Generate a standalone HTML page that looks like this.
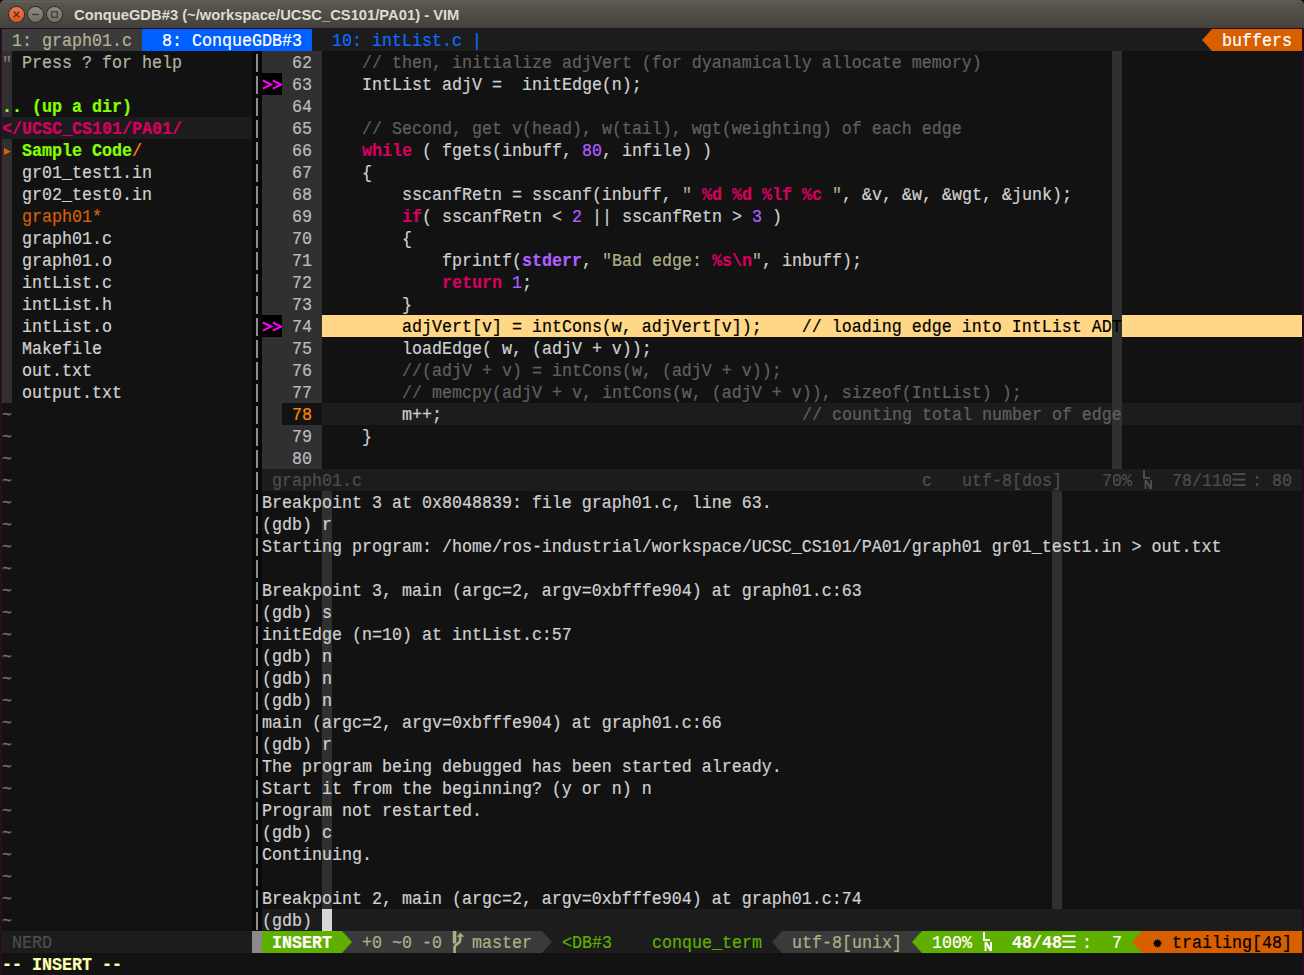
<!DOCTYPE html><html><head><meta charset="utf-8"><style>

html,body{margin:0;padding:0}
body{width:1304px;height:975px;overflow:hidden;background:#121212;position:relative}
#tb{position:absolute;left:0;top:0;width:1304px;height:28px;background:linear-gradient(#5c5950,#42413b);border-radius:5px 5px 0 0}
#tb:before{content:"";position:absolute;left:3px;right:3px;top:1px;height:1px;background:#64615a}
.btn{position:absolute;top:7px;left:9px;width:15px;height:15px;border-radius:50%;box-sizing:border-box}
.close{background:linear-gradient(#f07a4a,#df5420);box-shadow:0 0 0 1px #2f2e2a}
.min{background:linear-gradient(#8d8b85,#6f6d68);box-shadow:0 0 0 1px #2f2e2a}
.btn svg{position:absolute;left:0;top:0}
#tt{position:absolute;left:74px;top:6.5px;font:bold 14.75px "Liberation Sans",sans-serif;color:#dfdbd2;white-space:pre}
.fr{position:absolute;background:#2c0b22}
.r{position:absolute}
.t{position:absolute;height:22px;line-height:22px;font-family:"Liberation Mono",monospace;font-size:16.667px;white-space:pre;-webkit-text-stroke:0.2px currentColor;transform:scaleY(1.13);transform-origin:0 17px}
.b{font-weight:bold}

</style></head><body>

<div id="tb">
  <div class="btn close"><svg width="15" height="15" viewBox="0 0 16 16"><path d="M5,5 L11,11 M11,5 L5,11" stroke="#3a2a22" stroke-width="1.3"/></svg></div>
  <div class="btn min" style="left:28px"><svg width="15" height="15" viewBox="0 0 16 16"><path d="M4.5,8 H11.5" stroke="#3c3b37" stroke-width="1.4"/></svg></div>
  <div class="btn min" style="left:47px"><svg width="15" height="15" viewBox="0 0 16 16"><rect x="5" y="5" width="6" height="6" fill="none" stroke="#3c3b37" stroke-width="1.3"/></svg></div>
  <div id="tt">ConqueGDB#3 (~/workspace/UCSC_CS101/PA01) - VIM</div>
</div>

<div class="r" style="left:2px;top:29px;width:1300px;height:22px;background:#1c1c1c"></div>
<div class="r" style="left:2px;top:29px;width:140px;height:22px;background:#3a3a3a"></div>
<div class="r" style="left:142px;top:29px;width:170px;height:22px;background:#005fff"></div>
<div class="r" style="left:1212px;top:29px;width:90px;height:22px;background:#d75f00"></div>
<div class="r" style="left:2px;top:51px;width:10px;height:22px;background:#303030"></div>
<div class="r" style="left:2px;top:73px;width:10px;height:22px;background:#303030"></div>
<div class="r" style="left:2px;top:95px;width:10px;height:22px;background:#303030"></div>
<div class="r" style="left:2px;top:139px;width:10px;height:22px;background:#303030"></div>
<div class="r" style="left:2px;top:161px;width:10px;height:22px;background:#303030"></div>
<div class="r" style="left:2px;top:183px;width:10px;height:22px;background:#303030"></div>
<div class="r" style="left:2px;top:205px;width:10px;height:22px;background:#303030"></div>
<div class="r" style="left:2px;top:227px;width:10px;height:22px;background:#303030"></div>
<div class="r" style="left:2px;top:249px;width:10px;height:22px;background:#303030"></div>
<div class="r" style="left:2px;top:271px;width:10px;height:22px;background:#303030"></div>
<div class="r" style="left:2px;top:293px;width:10px;height:22px;background:#303030"></div>
<div class="r" style="left:2px;top:315px;width:10px;height:22px;background:#303030"></div>
<div class="r" style="left:2px;top:337px;width:10px;height:22px;background:#303030"></div>
<div class="r" style="left:2px;top:359px;width:10px;height:22px;background:#303030"></div>
<div class="r" style="left:2px;top:381px;width:10px;height:22px;background:#303030"></div>
<div class="r" style="left:2px;top:117px;width:250px;height:22px;background:#1c1c1c"></div>
<div class="r" style="left:252px;top:51px;width:10px;height:880px;background:#080808"></div>
<div class="r" style="left:256px;top:54px;width:2px;height:18px;background:#8e8e8e"></div>
<div class="r" style="left:256px;top:76px;width:2px;height:18px;background:#8e8e8e"></div>
<div class="r" style="left:256px;top:98px;width:2px;height:18px;background:#8e8e8e"></div>
<div class="r" style="left:256px;top:120px;width:2px;height:18px;background:#8e8e8e"></div>
<div class="r" style="left:256px;top:142px;width:2px;height:18px;background:#8e8e8e"></div>
<div class="r" style="left:256px;top:164px;width:2px;height:18px;background:#8e8e8e"></div>
<div class="r" style="left:256px;top:186px;width:2px;height:18px;background:#8e8e8e"></div>
<div class="r" style="left:256px;top:208px;width:2px;height:18px;background:#8e8e8e"></div>
<div class="r" style="left:256px;top:230px;width:2px;height:18px;background:#8e8e8e"></div>
<div class="r" style="left:256px;top:252px;width:2px;height:18px;background:#8e8e8e"></div>
<div class="r" style="left:256px;top:274px;width:2px;height:18px;background:#8e8e8e"></div>
<div class="r" style="left:256px;top:296px;width:2px;height:18px;background:#8e8e8e"></div>
<div class="r" style="left:256px;top:318px;width:2px;height:18px;background:#8e8e8e"></div>
<div class="r" style="left:256px;top:340px;width:2px;height:18px;background:#8e8e8e"></div>
<div class="r" style="left:256px;top:362px;width:2px;height:18px;background:#8e8e8e"></div>
<div class="r" style="left:256px;top:384px;width:2px;height:18px;background:#8e8e8e"></div>
<div class="r" style="left:256px;top:406px;width:2px;height:18px;background:#8e8e8e"></div>
<div class="r" style="left:256px;top:428px;width:2px;height:18px;background:#8e8e8e"></div>
<div class="r" style="left:256px;top:450px;width:2px;height:18px;background:#8e8e8e"></div>
<div class="r" style="left:256px;top:472px;width:2px;height:18px;background:#8e8e8e"></div>
<div class="r" style="left:256px;top:494px;width:2px;height:18px;background:#8e8e8e"></div>
<div class="r" style="left:256px;top:516px;width:2px;height:18px;background:#8e8e8e"></div>
<div class="r" style="left:256px;top:538px;width:2px;height:18px;background:#8e8e8e"></div>
<div class="r" style="left:256px;top:560px;width:2px;height:18px;background:#8e8e8e"></div>
<div class="r" style="left:256px;top:582px;width:2px;height:18px;background:#8e8e8e"></div>
<div class="r" style="left:256px;top:604px;width:2px;height:18px;background:#8e8e8e"></div>
<div class="r" style="left:256px;top:626px;width:2px;height:18px;background:#8e8e8e"></div>
<div class="r" style="left:256px;top:648px;width:2px;height:18px;background:#8e8e8e"></div>
<div class="r" style="left:256px;top:670px;width:2px;height:18px;background:#8e8e8e"></div>
<div class="r" style="left:256px;top:692px;width:2px;height:18px;background:#8e8e8e"></div>
<div class="r" style="left:256px;top:714px;width:2px;height:18px;background:#8e8e8e"></div>
<div class="r" style="left:256px;top:736px;width:2px;height:18px;background:#8e8e8e"></div>
<div class="r" style="left:256px;top:758px;width:2px;height:18px;background:#8e8e8e"></div>
<div class="r" style="left:256px;top:780px;width:2px;height:18px;background:#8e8e8e"></div>
<div class="r" style="left:256px;top:802px;width:2px;height:18px;background:#8e8e8e"></div>
<div class="r" style="left:256px;top:824px;width:2px;height:18px;background:#8e8e8e"></div>
<div class="r" style="left:256px;top:846px;width:2px;height:18px;background:#8e8e8e"></div>
<div class="r" style="left:256px;top:868px;width:2px;height:18px;background:#8e8e8e"></div>
<div class="r" style="left:256px;top:890px;width:2px;height:18px;background:#8e8e8e"></div>
<div class="r" style="left:256px;top:912px;width:2px;height:18px;background:#8e8e8e"></div>
<div class="r" style="left:262px;top:51px;width:60px;height:418px;background:#303030"></div>
<div class="r" style="left:1112px;top:51px;width:10px;height:418px;background:#303030"></div>
<div class="r" style="left:262px;top:73px;width:20px;height:22px;background:#000000"></div>
<div class="r" style="left:322px;top:315px;width:980px;height:22px;background:#ffd787"></div>
<div class="r" style="left:1112px;top:315px;width:10px;height:22px;background:#303030"></div>
<div class="r" style="left:262px;top:315px;width:20px;height:22px;background:#000000"></div>
<div class="r" style="left:322px;top:403px;width:980px;height:22px;background:#1c1c1c"></div>
<div class="r" style="left:1112px;top:403px;width:10px;height:22px;background:#303030"></div>
<div class="r" style="left:282px;top:403px;width:40px;height:22px;background:#121212"></div>
<div class="r" style="left:262px;top:469px;width:1040px;height:22px;background:#1c1c1c"></div>
<div class="r" style="left:322px;top:491px;width:10px;height:440px;background:#303030"></div>
<div class="r" style="left:1052px;top:491px;width:10px;height:440px;background:#303030"></div>
<div class="r" style="left:262px;top:909px;width:1040px;height:22px;background:#1c1c1c"></div>
<div class="r" style="left:322px;top:909px;width:10px;height:22px;background:#d7d7d7"></div>
<div class="r" style="left:2px;top:931px;width:250px;height:22px;background:#1c1c1c"></div>
<div class="r" style="left:252px;top:931px;width:10px;height:22px;background:#8a8a8a"></div>
<div class="r" style="left:262px;top:931px;width:80px;height:22px;background:#5faf00"></div>
<div class="r" style="left:342px;top:931px;width:200px;height:22px;background:#3a3a3a"></div>
<div class="r" style="left:542px;top:931px;width:240px;height:22px;background:#1c1c1c"></div>
<div class="r" style="left:782px;top:931px;width:140px;height:22px;background:#3a3a3a"></div>
<div class="r" style="left:922px;top:931px;width:220px;height:22px;background:#5faf00"></div>
<div class="r" style="left:1142px;top:931px;width:160px;height:22px;background:#d75f00"></div>
<div class="t" style="left:12px;top:30.8px;color:#b5b196">1: graph01.c</div>
<div class="t" style="left:162px;top:30.8px;color:#ffffff">8: ConqueGDB#3</div>
<div class="t" style="left:332px;top:30.8px;color:#0a6cff">10: intList.c |</div>
<div class="t" style="left:1222px;top:30.8px;color:#ffffff">buffers</div>
<div class="t" style="left:2px;top:54.3px;color:#808080">&quot;</div>
<div class="t" style="left:22px;top:52.8px;color:#b2b2a0">Press ? for help</div>
<div class="t b" style="left:2px;top:96.8px;color:#87ff00">.. (up a dir)</div>
<div class="t b" style="left:2px;top:118.8px;color:#d7005f">&lt;/UCSC_CS101/PA01/</div>
<div class="t b" style="left:22px;top:140.8px;color:#87ff00">Sample Code</div>
<div class="t" style="left:132px;top:140.8px;color:#ff8700">/</div>
<div class="t" style="left:22px;top:162.8px;color:#d0d0d0">gr01_test1.in</div>
<div class="t" style="left:22px;top:184.8px;color:#d0d0d0">gr02_test0.in</div>
<div class="t" style="left:22px;top:206.8px;color:#d75f00">graph01*</div>
<div class="t" style="left:22px;top:228.8px;color:#d0d0d0">graph01.c</div>
<div class="t" style="left:22px;top:250.8px;color:#d0d0d0">graph01.o</div>
<div class="t" style="left:22px;top:272.8px;color:#d0d0d0">intList.c</div>
<div class="t" style="left:22px;top:294.8px;color:#d0d0d0">intList.h</div>
<div class="t" style="left:22px;top:316.8px;color:#d0d0d0">intList.o</div>
<div class="t" style="left:22px;top:338.8px;color:#d0d0d0">Makefile</div>
<div class="t" style="left:22px;top:360.8px;color:#d0d0d0">out.txt</div>
<div class="t" style="left:22px;top:382.8px;color:#d0d0d0">output.txt</div>
<div class="t" style="left:2px;top:404.8px;color:#707062">~</div>
<div class="t" style="left:2px;top:426.8px;color:#707062">~</div>
<div class="t" style="left:2px;top:448.8px;color:#707062">~</div>
<div class="t" style="left:2px;top:470.8px;color:#707062">~</div>
<div class="t" style="left:2px;top:492.8px;color:#707062">~</div>
<div class="t" style="left:2px;top:514.8px;color:#707062">~</div>
<div class="t" style="left:2px;top:536.8px;color:#707062">~</div>
<div class="t" style="left:2px;top:558.8px;color:#707062">~</div>
<div class="t" style="left:2px;top:580.8px;color:#707062">~</div>
<div class="t" style="left:2px;top:602.8px;color:#707062">~</div>
<div class="t" style="left:2px;top:624.8px;color:#707062">~</div>
<div class="t" style="left:2px;top:646.8px;color:#707062">~</div>
<div class="t" style="left:2px;top:668.8px;color:#707062">~</div>
<div class="t" style="left:2px;top:690.8px;color:#707062">~</div>
<div class="t" style="left:2px;top:712.8px;color:#707062">~</div>
<div class="t" style="left:2px;top:734.8px;color:#707062">~</div>
<div class="t" style="left:2px;top:756.8px;color:#707062">~</div>
<div class="t" style="left:2px;top:778.8px;color:#707062">~</div>
<div class="t" style="left:2px;top:800.8px;color:#707062">~</div>
<div class="t" style="left:2px;top:822.8px;color:#707062">~</div>
<div class="t" style="left:2px;top:844.8px;color:#707062">~</div>
<div class="t" style="left:2px;top:866.8px;color:#707062">~</div>
<div class="t" style="left:2px;top:888.8px;color:#707062">~</div>
<div class="t" style="left:2px;top:910.8px;color:#707062">~</div>
<div class="t" style="left:282px;top:52.8px;color:#bcbcbc"> 62</div>
<div class="t" style="left:362px;top:52.8px;color:#606060">// then, initialize adjVert (for dyanamically allocate memory)</div>
<div class="t" style="left:282px;top:74.8px;color:#bcbcbc"> 63</div>
<div class="t" style="left:322px;top:74.8px;color:#d0d0d0">    IntList adjV =  initEdge(n);</div>
<div class="t" style="left:282px;top:96.8px;color:#bcbcbc"> 64</div>
<div class="t" style="left:282px;top:118.8px;color:#bcbcbc"> 65</div>
<div class="t" style="left:362px;top:118.8px;color:#606060">// Second, get v(head), w(tail), wgt(weighting) of each edge</div>
<div class="t" style="left:282px;top:140.8px;color:#bcbcbc"> 66</div>
<div class="t b" style="left:362px;top:140.8px;color:#d7005f">while</div>
<div class="t" style="left:412px;top:140.8px;color:#d0d0d0"> ( fgets(inbuff, </div>
<div class="t" style="left:582px;top:140.8px;color:#af5fff">80</div>
<div class="t" style="left:602px;top:140.8px;color:#d0d0d0">, infile) )</div>
<div class="t" style="left:282px;top:162.8px;color:#bcbcbc"> 67</div>
<div class="t" style="left:322px;top:162.8px;color:#d0d0d0">    {</div>
<div class="t" style="left:282px;top:184.8px;color:#bcbcbc"> 68</div>
<div class="t" style="left:322px;top:184.8px;color:#d0d0d0">        sscanfRetn = sscanf(inbuff, </div>
<div class="t" style="left:682px;top:184.8px;color:#afaf87">&quot; </div>
<div class="t b" style="left:702px;top:184.8px;color:#d7005f">%d</div>
<div class="t b" style="left:732px;top:184.8px;color:#d7005f">%d</div>
<div class="t b" style="left:762px;top:184.8px;color:#d7005f">%lf</div>
<div class="t b" style="left:802px;top:184.8px;color:#d7005f">%c</div>
<div class="t" style="left:822px;top:184.8px;color:#afaf87"> &quot;</div>
<div class="t" style="left:842px;top:184.8px;color:#d0d0d0">, &amp;v, &amp;w, &amp;wgt, &amp;junk);</div>
<div class="t" style="left:282px;top:206.8px;color:#bcbcbc"> 69</div>
<div class="t b" style="left:402px;top:206.8px;color:#d7005f">if</div>
<div class="t" style="left:422px;top:206.8px;color:#d0d0d0">( sscanfRetn &lt; </div>
<div class="t" style="left:572px;top:206.8px;color:#af5fff">2</div>
<div class="t" style="left:582px;top:206.8px;color:#d0d0d0"> || sscanfRetn &gt; </div>
<div class="t" style="left:752px;top:206.8px;color:#af5fff">3</div>
<div class="t" style="left:762px;top:206.8px;color:#d0d0d0"> )</div>
<div class="t" style="left:282px;top:228.8px;color:#bcbcbc"> 70</div>
<div class="t" style="left:322px;top:228.8px;color:#d0d0d0">        {</div>
<div class="t" style="left:282px;top:250.8px;color:#bcbcbc"> 71</div>
<div class="t" style="left:322px;top:250.8px;color:#d0d0d0">            fprintf(</div>
<div class="t b" style="left:522px;top:250.8px;color:#af5fff">stderr</div>
<div class="t" style="left:582px;top:250.8px;color:#d0d0d0">, </div>
<div class="t" style="left:602px;top:250.8px;color:#afaf87">&quot;Bad edge: </div>
<div class="t b" style="left:712px;top:250.8px;color:#d7005f">%s\n</div>
<div class="t" style="left:752px;top:250.8px;color:#afaf87">&quot;</div>
<div class="t" style="left:762px;top:250.8px;color:#d0d0d0">, inbuff);</div>
<div class="t" style="left:282px;top:272.8px;color:#bcbcbc"> 72</div>
<div class="t b" style="left:442px;top:272.8px;color:#d7005f">return</div>
<div class="t" style="left:512px;top:272.8px;color:#af5fff">1</div>
<div class="t" style="left:522px;top:272.8px;color:#d0d0d0">;</div>
<div class="t" style="left:282px;top:294.8px;color:#bcbcbc"> 73</div>
<div class="t" style="left:322px;top:294.8px;color:#d0d0d0">        }</div>
<div class="t" style="left:282px;top:316.8px;color:#bcbcbc"> 74</div>
<div class="t" style="left:322px;top:316.8px;color:#000000">        adjVert[v] = intCons(w, adjVert[v]);    // loading edge into IntList ADT</div>
<div class="t" style="left:282px;top:338.8px;color:#bcbcbc"> 75</div>
<div class="t" style="left:322px;top:338.8px;color:#d0d0d0">        loadEdge( w, (adjV + v));</div>
<div class="t" style="left:282px;top:360.8px;color:#bcbcbc"> 76</div>
<div class="t" style="left:402px;top:360.8px;color:#606060">//(adjV + v) = intCons(w, (adjV + v));</div>
<div class="t" style="left:282px;top:382.8px;color:#bcbcbc"> 77</div>
<div class="t" style="left:402px;top:382.8px;color:#606060">// memcpy(adjV + v, intCons(w, (adjV + v)), sizeof(IntList) );</div>
<div class="t" style="left:292px;top:404.8px;color:#ff8700">78</div>
<div class="t" style="left:322px;top:404.8px;color:#d0d0d0">        m++;                                    </div>
<div class="t" style="left:802px;top:404.8px;color:#606060">// counting total number of edge</div>
<div class="t" style="left:282px;top:426.8px;color:#bcbcbc"> 79</div>
<div class="t" style="left:322px;top:426.8px;color:#d0d0d0">    }</div>
<div class="t" style="left:282px;top:448.8px;color:#bcbcbc"> 80</div>
<div class="t" style="left:272px;top:470.8px;color:#4e4e4e">graph01.c</div>
<div class="t" style="left:922px;top:470.8px;color:#4e4e4e">c</div>
<div class="t" style="left:962px;top:470.8px;color:#4e4e4e">utf-8[dos]</div>
<div class="t" style="left:1102px;top:470.8px;color:#4e4e4e">70%</div>
<div class="t" style="left:1172px;top:470.8px;color:#4e4e4e">78/110</div>
<div class="t" style="left:1252px;top:470.8px;color:#4e4e4e">:</div>
<div class="t" style="left:1272px;top:470.8px;color:#4e4e4e">80</div>
<div class="t" style="left:262px;top:492.8px;color:#d0d0d0">Breakpoint 3 at 0x8048839: file graph01.c, line 63.</div>
<div class="t" style="left:262px;top:514.8px;color:#d0d0d0">(gdb) r</div>
<div class="t" style="left:262px;top:536.8px;color:#d0d0d0">Starting program: /home/ros-industrial/workspace/UCSC_CS101/PA01/graph01 gr01_test1.in &gt; out.txt</div>
<div class="t" style="left:262px;top:580.8px;color:#d0d0d0">Breakpoint 3, main (argc=2, argv=0xbfffe904) at graph01.c:63</div>
<div class="t" style="left:262px;top:602.8px;color:#d0d0d0">(gdb) s</div>
<div class="t" style="left:262px;top:624.8px;color:#d0d0d0">initEdge (n=10) at intList.c:57</div>
<div class="t" style="left:262px;top:646.8px;color:#d0d0d0">(gdb) n</div>
<div class="t" style="left:262px;top:668.8px;color:#d0d0d0">(gdb) n</div>
<div class="t" style="left:262px;top:690.8px;color:#d0d0d0">(gdb) n</div>
<div class="t" style="left:262px;top:712.8px;color:#d0d0d0">main (argc=2, argv=0xbfffe904) at graph01.c:66</div>
<div class="t" style="left:262px;top:734.8px;color:#d0d0d0">(gdb) r</div>
<div class="t" style="left:262px;top:756.8px;color:#d0d0d0">The program being debugged has been started already.</div>
<div class="t" style="left:262px;top:778.8px;color:#d0d0d0">Start it from the beginning? (y or n) n</div>
<div class="t" style="left:262px;top:800.8px;color:#d0d0d0">Program not restarted.</div>
<div class="t" style="left:262px;top:822.8px;color:#d0d0d0">(gdb) c</div>
<div class="t" style="left:262px;top:844.8px;color:#d0d0d0">Continuing.</div>
<div class="t" style="left:262px;top:888.8px;color:#d0d0d0">Breakpoint 2, main (argc=2, argv=0xbfffe904) at graph01.c:74</div>
<div class="t" style="left:262px;top:910.8px;color:#d0d0d0">(gdb) </div>
<div class="t" style="left:12px;top:932.8px;color:#4e4e4e">NERD</div>
<div class="t b" style="left:272px;top:932.8px;color:#ffffff">INSERT</div>
<div class="t" style="left:362px;top:932.8px;color:#afaf87">+0 ~0 -0</div>
<div class="t" style="left:472px;top:932.8px;color:#afaf87">master</div>
<div class="t" style="left:562px;top:932.8px;color:#5faf00">&lt;DB#3</div>
<div class="t" style="left:652px;top:932.8px;color:#5faf00">conque_term</div>
<div class="t" style="left:792px;top:932.8px;color:#afaf87">utf-8[unix]</div>
<div class="t" style="left:932px;top:932.8px;color:#ffffff">100%</div>
<div class="t b" style="left:1012px;top:932.8px;color:#ffffff">48/48</div>
<div class="t" style="left:1082px;top:932.8px;color:#ffffff">:</div>
<div class="t" style="left:1112px;top:932.8px;color:#ffffff">7</div>
<div class="t" style="left:1172px;top:932.8px;color:#000000">trailing[48]</div>
<div class="t b" style="left:2px;top:954.8px;color:#ffffaf">-- INSERT --</div>
<svg style="position:absolute;left:1202px;top:29px" width="10" height="22"><polygon points="10,0 10,22 0,11" fill="#d75f00"/></svg>
<svg style="position:absolute;left:2px;top:139px" width="10" height="22"><polygon points="2,9 9,12.5 2,16" fill="#e06000"/></svg>
<svg style="position:absolute;left:262px;top:73px" width="20" height="22"><g fill="none" stroke="#ff00ff" stroke-width="2" stroke-linejoin="miter"><polyline points="0.8,7.5 9.2,11.6 0.8,15.7"/><polyline points="10.8,7.5 19.2,11.6 10.8,15.7"/></g></svg>
<svg style="position:absolute;left:262px;top:315px" width="20" height="22"><g fill="none" stroke="#ff00ff" stroke-width="2" stroke-linejoin="miter"><polyline points="0.8,7.5 9.2,11.6 0.8,15.7"/><polyline points="10.8,7.5 19.2,11.6 10.8,15.7"/></g></svg>
<svg style="position:absolute;left:342px;top:931px" width="10" height="22"><polygon points="0,0 10,11 0,22" fill="#5faf00"/></svg>
<svg style="position:absolute;left:542px;top:931px" width="10" height="22"><polygon points="0,0 10,11 0,22" fill="#3a3a3a"/></svg>
<svg style="position:absolute;left:772px;top:931px" width="10" height="22"><polygon points="10,0 10,22 0,11" fill="#3a3a3a"/></svg>
<svg style="position:absolute;left:912px;top:931px" width="10" height="22"><polygon points="10,0 10,22 0,11" fill="#5faf00"/></svg>
<svg style="position:absolute;left:1132px;top:931px" width="10" height="22"><polygon points="10,0 10,22 0,11" fill="#d75f00"/></svg>
<svg style="position:absolute;left:1152px;top:931px" width="12" height="22"><polygon points="5.50,7.80 6.28,9.50 7.80,8.42 7.62,10.28 9.48,10.10 8.40,11.62 10.10,12.40 8.40,13.18 9.48,14.70 7.62,14.52 7.80,16.38 6.28,15.30 5.50,17.00 4.72,15.30 3.20,16.38 3.38,14.52 1.52,14.70 2.60,13.18 0.90,12.40 2.60,11.62 1.52,10.10 3.38,10.28 3.20,8.42 4.72,9.50" fill="#000"/></svg>
<svg style="position:absolute;left:452px;top:931px" width="14" height="22"><rect x="0.8" y="0" width="3.5" height="12.5" fill="#afaf87"/><path d="M2.55,22 V17 Q2.55,14.5 5,13.2 Q8.1,11.6 8.1,9 V5" fill="none" stroke="#afaf87" stroke-width="2.6"/><polygon points="8.5,1.8 4.6,5.8 12.4,5.8" fill="#afaf87"/></svg>
<svg style="position:absolute;left:1142px;top:469px" width="12" height="22" fill="#4e4e4e"><rect x="1" y="1.2" width="2" height="8.7"/><rect x="1" y="8" width="7" height="1.9"/><rect x="2.6" y="11" width="1.9" height="9"/><rect x="8.1" y="11" width="1.9" height="9"/><path d="M3.6,11.2 L9,19.8" stroke="#4e4e4e" stroke-width="2.2"/></svg>
<svg style="position:absolute;left:982px;top:931px" width="12" height="22" fill="#ffffff"><rect x="1" y="1.2" width="2" height="8.7"/><rect x="1" y="8" width="7" height="1.9"/><rect x="2.6" y="11" width="1.9" height="9"/><rect x="8.1" y="11" width="1.9" height="9"/><path d="M3.6,11.2 L9,19.8" stroke="#ffffff" stroke-width="2.2"/></svg>
<svg style="position:absolute;left:1232px;top:469px" width="14" height="22"><rect x="0.5" y="4.2" width="13" height="1.8" fill="#4e4e4e"/><rect x="0.5" y="9.7" width="13" height="1.8" fill="#4e4e4e"/><rect x="0.5" y="15.2" width="13" height="1.8" fill="#4e4e4e"/></svg>
<svg style="position:absolute;left:1062px;top:931px" width="14" height="22"><rect x="0.5" y="4.2" width="13" height="1.8" fill="#ffffff"/><rect x="0.5" y="9.7" width="13" height="1.8" fill="#ffffff"/><rect x="0.5" y="15.2" width="13" height="1.8" fill="#ffffff"/></svg>
<div class="fr" style="left:0;top:28px;width:1304px;height:1px"></div>
<div class="fr" style="left:1px;top:28px;width:1px;height:947px;background:#380c2e"></div>
<div class="fr" style="left:0;top:28px;width:1px;height:947px;background:#151515"></div>
<div class="fr" style="left:1302px;top:28px;width:2px;height:947px"></div>
</body></html>
